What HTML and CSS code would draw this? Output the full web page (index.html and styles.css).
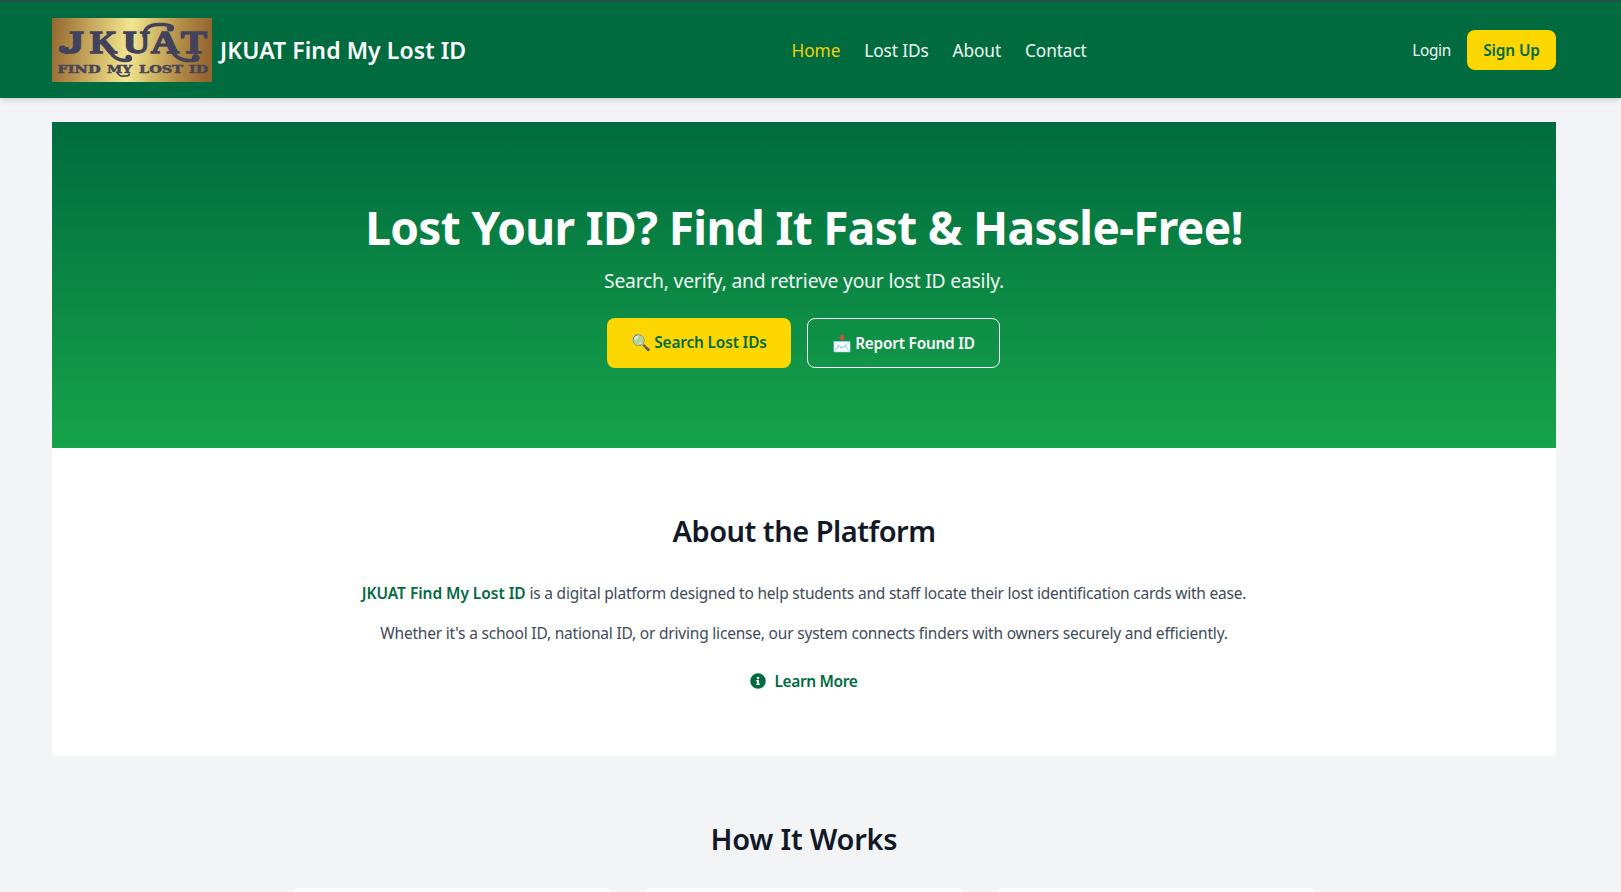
FILE: index.html
```html
<!DOCTYPE html>
<html lang="en">
<head>
<meta charset="utf-8">
<title>JKUAT Find My Lost ID</title>
<link rel="stylesheet" href="styles.css">
</head>
<body>
<header class="header">
  <div class="header-inner">
    <a class="brand">
      <svg class="logo" viewBox="0 0 160 64" role="img" aria-label="JKUAT logo">
        <defs>
          <linearGradient id="gold" x1="0" x2="1" y1="0" y2="0.04">
            <stop offset="0" stop-color="#946830"/>
            <stop offset="0.12" stop-color="#ac8544"/>
            <stop offset="0.36" stop-color="#dcc472"/>
            <stop offset="0.5" stop-color="#f1e692"/>
            <stop offset="0.63" stop-color="#d9c26d"/>
            <stop offset="0.82" stop-color="#b18b45"/>
            <stop offset="1" stop-color="#95662f"/>
          </linearGradient>
        </defs>
        <rect width="160" height="64" fill="url(#gold)"/>
        <g class="logo-letters">
          <text x="12" y="34.500" textLength="20" lengthAdjust="spacingAndGlyphs">J</text>
          <text x="38" y="34.500" textLength="27" lengthAdjust="spacingAndGlyphs">K</text>
          <text x="71" y="34.500" textLength="27" lengthAdjust="spacingAndGlyphs">U</text>
          <text x="99" y="34.500" textLength="28" lengthAdjust="spacingAndGlyphs">A</text>
          <text x="129" y="34.500" textLength="26" lengthAdjust="spacingAndGlyphs">T</text>
        </g>
        <g class="swash">
          <path d="M23 29Q20 35 13 34Q8 33 9 30"/>
          <path d="M55 29C60 39 66 42.500 73 42.500C78 42.500 80 41 77 39"/>
          <path d="M92 18C92 8 101 6 109 6.500C117 6 121 9 119 11"/>
          <path d="M119 31C123 40 130 43 139 42.500C146 42.500 148 40 144 38"/>
        </g>
        <g class="swash-dots"><circle cx="10.500" cy="31" r="3.600"/><circle cx="76.500" cy="40" r="3.200"/><circle cx="118.500" cy="10" r="3.600"/><circle cx="143.500" cy="39.800" r="3.600"/></g>
        <g class="logo-tagline">
          <text x="5.500" y="55.300" textLength="43" lengthAdjust="spacingAndGlyphs">FIND</text>
          <text x="55" y="55.300" textLength="25" lengthAdjust="spacingAndGlyphs">MY</text>
          <text x="87" y="55.300" textLength="44" lengthAdjust="spacingAndGlyphs">LOST</text>
          <text x="137" y="55.300" textLength="19" lengthAdjust="spacingAndGlyphs">ID</text>
        </g>
        <path class="swash thin" d="M65 54Q67 59 73 58Q78 58 77 56"/>
      </svg>
      <span class="brand-name">JKUAT Find My Lost ID</span>
    </a>
    <nav class="nav">
      <a class="active">Home</a><a>Lost IDs</a><a>About</a><a>Contact</a>
    </nav>
    <div class="auth">
      <a class="login">Login</a>
      <a class="signup">Sign Up</a>
    </div>
  </div>
</header>
<main class="main">
  <section class="hero">
    <h1>Lost Your ID? Find It Fast &amp; Hassle-Free!</h1>
    <p>Search, verify, and retrieve your lost ID easily.</p>
    <div class="actions">
      <a class="btn primary"><span class="emoji">🔍</span><span class="search-label">Search Lost IDs</span></a>
      <a class="btn outline"><span class="emoji">📩</span><span class="report-label">Report Found ID</span></a>
    </div>
  </section>
  <section class="about">
    <h2 class="about-title">About the Platform</h2>
    <p class="intro"><strong>JKUAT Find My Lost ID</strong> is a digital platform designed to help students and staff locate their lost identification cards with ease.</p>
    <p>Whether it's a school ID, national ID, or driving license, our system connects finders with owners securely and efficiently.</p>
    <a class="learn">
      <svg viewBox="0 0 512 512" aria-hidden="true"><path d="M256 8a248 248 0 1 0 0 496 248 248 0 0 0 0-496zm0 110a42 42 0 1 1 0 84 42 42 0 0 1 0-84zm56 254c0 7-5 12-12 12h-88c-7 0-12-5-12-12v-24c0-7 5-12 12-12h12v-64h-12c-7 0-12-5-12-12v-24c0-7 5-12 12-12h64c7 0 12 5 12 12v100h12c7 0 12 5 12 12z"/></svg>
      <span>Learn More</span>
    </a>
  </section>
  <section class="how">
    <h2>How It Works</h2>
    <div class="cards"><div class="card"></div><div class="card"></div><div class="card"></div></div>
  </section>
</main>
</body>
</html>
```
FILE: styles.css
```css
* { box-sizing: border-box; margin: 0; padding: 0; }
body {
  height: 892px;
  overflow: hidden;
  display: flex;
  flex-direction: column;
  background: #f3f4f6;
  border-top: 1px solid #3f3d50;
  font: 15.5px/24px "Noto Sans", sans-serif;
  color: #414b5a;
}
.header {
  flex: none;
  height: 97px;
  padding: 17px 13px 16px 0;
  background: #006b3f;
  color: #fff;
  box-shadow: 0 4px 6px -1px rgba(0,0,0,.1), 0 2px 4px -2px rgba(0,0,0,.1);
}
.header-inner {
  width: 1504px;
  height: 64px;
  margin: 0 auto;
  display: flex;
  align-items: center;
  justify-content: space-between;
}
.brand { display: flex; align-items: center; gap: 8px; }
.logo { width: 160px; height: 64px; display: block; }
.logo-letters { font: bold 31px "Liberation Serif", serif; fill: #42425c; stroke: #42425c; stroke-width: 1.5; }
.logo-tagline { font: bold 10.5px "DejaVu Serif", serif; fill: #4a4658; stroke: #4a4658; stroke-width: .5; }
.swash { fill: none; stroke: #42425c; stroke-width: 3.6; stroke-linecap: round; }
.swash.thin { stroke-width: 1.6; }
.swash-dots { fill: #42425c; }
.brand-name { font-size: 23px; font-weight: 600; line-height: 32px; letter-spacing: .08px; }
.nav { display: flex; gap: 24px; padding-top: 2px; font-size: 17.3px; line-height: 28px; letter-spacing: -.12px; }
.nav a { color: #f0f6f3; }
.nav .active { color: #f5d000; }
.auth { display: flex; align-items: center; gap: 16px; font-size: 15.4px; }
.login { padding-top: 2px; letter-spacing: -.3px; color: #f0f6f3; }
.signup {
  width: 89px;
  height: 40px;
  padding-top: 1px;
  border-radius: 8px;
  background: #ffd700;
  color: #006b3f;
  font-weight: 600;
  line-height: 40px;
  text-align: center;
  letter-spacing: -.1px;
}
.main { flex: 1; min-height: 0; overflow: hidden; width: 1504px; margin: 24px 65px 0 52px; }
.hero {
  height: 326px;
  padding: 81px 0 80px;
  background: linear-gradient(#006b3f, #16a34a);
  color: #fff;
  text-align: center;
}
.hero h1 { font-size: 46px; line-height: 48px; font-weight: 700; letter-spacing: -.65px; }
.hero p { margin-top: 16px; font-size: 19.3px; line-height: 28px; letter-spacing: -.2px; color: #f0f7f3; }
.actions { display: flex; justify-content: center; gap: 16px; margin-top: 23px; }
.btn {
  display: flex;
  gap: 4px;
  height: 50px;
  padding: 13px 0 11px;
  justify-content: center;
  border-radius: 8px;
  font-size: 15.4px;
  font-weight: 600;
  white-space: nowrap;
}
.primary { width: 184px; background: #ffd700; color: #006b3f; }
.outline { width: 193px; margin-right: 1px; border: 1px solid #fff; }
.emoji { margin-top: -1px; font-size: 16px; width: 19px; }
.search-label { letter-spacing: -.15px; }
.report-label { letter-spacing: -.22px; }
.about { height: 308px; padding: 65px 0 63px; background: #fff; text-align: center; }
h2 { font-size: 29px; line-height: 36px; font-weight: 600; letter-spacing: -.25px; color: #111827; text-align: center; }
.about-title { letter-spacing: -.5px; margin-bottom: 32px; }
.about p { margin-bottom: 16px; letter-spacing: -.2px; }
.about .intro { letter-spacing: -.21px; }
.about strong { font-weight: 600; letter-spacing: -.04px; color: #006b3f; }
.learn {
  display: flex;
  justify-content: center;
  align-items: center;
  gap: 8px;
  margin-top: 24px;
  color: #006b3f;
  font-weight: 600;
  letter-spacing: -.35px;
}
.learn svg { width: 16px; height: 16px; fill: currentColor; }
.how { padding: 65px 0 0; }
.cards { width: 1024px; height: 4px; overflow: hidden; margin: 31px auto 0; display: grid; grid-template-columns: repeat(3, 1fr); gap: 32px; }
.card { height: 16px; border-radius: 8px; background: #fff; }
```
